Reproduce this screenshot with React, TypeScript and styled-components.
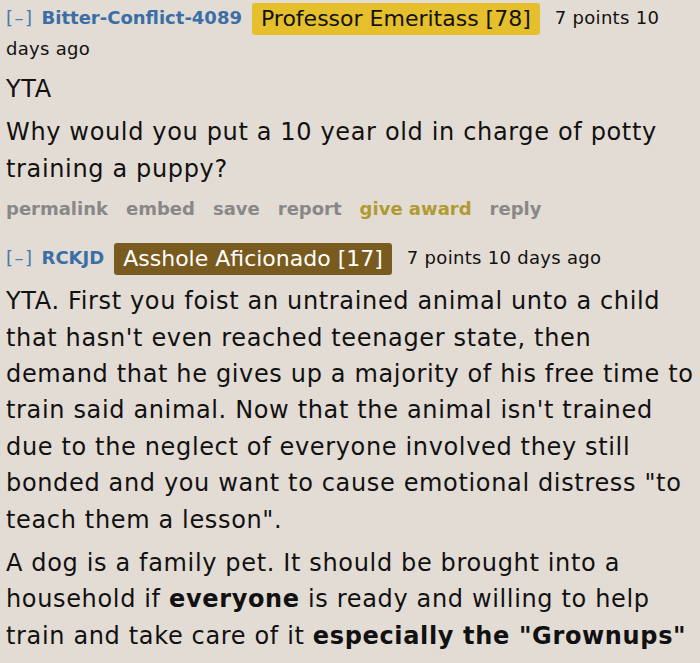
import React from "react";
import styled, { createGlobalStyle } from "styled-components";

const Global = createGlobalStyle`
  html, body { margin: 0; padding: 0; background: #e3dcd5; }
  body { font-family: "DejaVu Sans", Verdana, sans-serif; color: #111; }
`;

const Page = styled.div`
  padding: 3px 0 0 6px;
  width: 700px;
  box-sizing: border-box;
`;

const Comment = styled.div`
  margin-bottom: 19px;
`;

const Tagline = styled.div`
  font-size: 18px;
  line-height: 28px;
  color: #111;
`;

const Expand = styled.span`
  color: #4a79ae;
  font-weight: normal;
  letter-spacing: 1.5px;
  margin-right: 8px;
`;

const Author = styled.span`
  color: #3a6ea5;
  font-weight: bold;
  margin-right: 10px;
`;

const Flair = styled.span<{ $bg: string; $fg: string }>`
  display: inline-block;
  background: ${(p) => p.$bg};
  color: ${(p) => p.$fg};
  font-size: 22px;
  line-height: 32px;
  padding: 0 9px;
  border-radius: 3px;
  margin-right: 15px;
  vertical-align: -2px;
`;

const Meta = styled.span`
  color: #111;
  letter-spacing: 0.3px;
`;

const Body = styled.div`
  font-size: 24px;
  line-height: 36.4px;
  letter-spacing: 0.65px;
  margin-top: 8px;
  p { margin: 0 0 7px 0; }
  p + p { margin-top: 2px; }
  b { font-weight: bold; }
`;

const Buttons = styled.ul`
  list-style: none;
  margin: 0;
  padding: 0;
  display: flex;
  gap: 18px;
  font-size: 18px;
  font-weight: bold;
  line-height: 30px;
  margin-top: 0;
`;

const Btn = styled.li<{ $gold?: boolean }>`
  color: ${(p) => (p.$gold ? "#b09a32" : "#888")};
`;

export default function App() {
  return (
    <>
      <Global />
      <Page>
        <Comment>
          <Tagline>
            <Expand>[–]</Expand>
            <Author>Bitter-Conflict-4089</Author>
            <Flair $bg="#e5bf2c" $fg="#111">Professor Emeritass [78]</Flair>
            <Meta>7 points 10 days ago</Meta>
          </Tagline>
          <Body>
            <p>YTA</p>
            <p>Why would you put a 10 year old in charge of potty training a puppy?</p>
          </Body>
          <Buttons>
            <Btn>permalink</Btn>
            <Btn>embed</Btn>
            <Btn>save</Btn>
            <Btn>report</Btn>
            <Btn $gold>give award</Btn>
            <Btn>reply</Btn>
          </Buttons>
        </Comment>
        <Comment>
          <Tagline>
            <Expand>[–]</Expand>
            <Author>RCKJD</Author>
            <Flair $bg="#7a5b1f" $fg="#fff">Asshole Aficionado [17]</Flair>
            <Meta>7 points 10 days ago</Meta>
          </Tagline>
          <Body>
            <p>
              YTA. First you foist an untrained animal unto a child that hasn't even reached teenager
              state, then demand that he gives up a majority of his free time to train said animal. Now
              that the animal isn't trained due to the neglect of everyone involved they still bonded and
              you want to cause emotional distress "to teach them a lesson".
            </p>
            <p>
              A dog is a family pet. It should be brought into a household if <b>everyone</b> is ready
              and willing to help train and take care of it <b>especially the "Grownups"</b>
            </p>
          </Body>
        </Comment>
      </Page>
    </>
  );
}
